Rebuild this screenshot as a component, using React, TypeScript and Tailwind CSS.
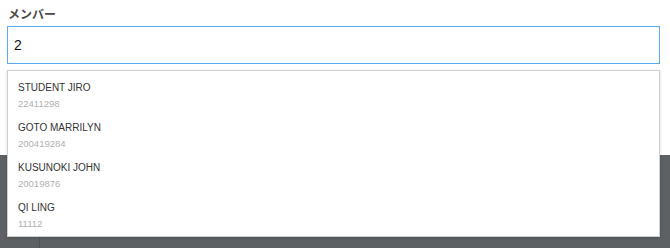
import React from "react";

const members = [
  { name: "STUDENT JIRO", id: "22411298" },
  { name: "GOTO MARRILYN", id: "200419284" },
  { name: "KUSUNOKI JOHN", id: "20019876" },
  { name: "QI LING", id: "11112" },
];

export default function App() {
  return (
    <div
      className="relative w-[670px] h-[248px] overflow-hidden bg-white"
      style={{ fontFamily: '"Liberation Sans", "Noto Sans CJK JP", Arial, sans-serif' }}
    >
      <div className="h-[155px] bg-white px-[7px] pt-[7px]">
        <div className="pl-[1px] text-[12px] leading-[16px] font-semibold text-[#4a4a4a]">
          メンバー
        </div>
        <div className="mt-[3px] w-[653px] h-[38px] border border-[#5aaaf2] flex items-center pl-[6px] text-[14px] text-[#111]">
          2
        </div>
      </div>
      <div className="h-[93px] bg-[#5e6163] flex">
        <div className="w-[40px] border-r border-[#515456]" />
      </div>

      <div className="absolute left-[7px] top-[70px] w-[653px] h-[167px] bg-white border border-[#cfcfcf] shadow-[0_1px_3px_rgba(0,0,0,0.15)]">
        {members.map((m) => (
          <div key={m.name} className="h-[40px] pl-[10px] pt-[9px]">
            <div className="h-[16px] leading-[16px] text-[10px] text-[#333]">{m.name}</div>
            <div className="mt-[1px] h-[14px] leading-[14px] text-[9.5px] text-[#b0b0b0]">{m.id}</div>
          </div>
        ))}
      </div>
    </div>
  );
}
